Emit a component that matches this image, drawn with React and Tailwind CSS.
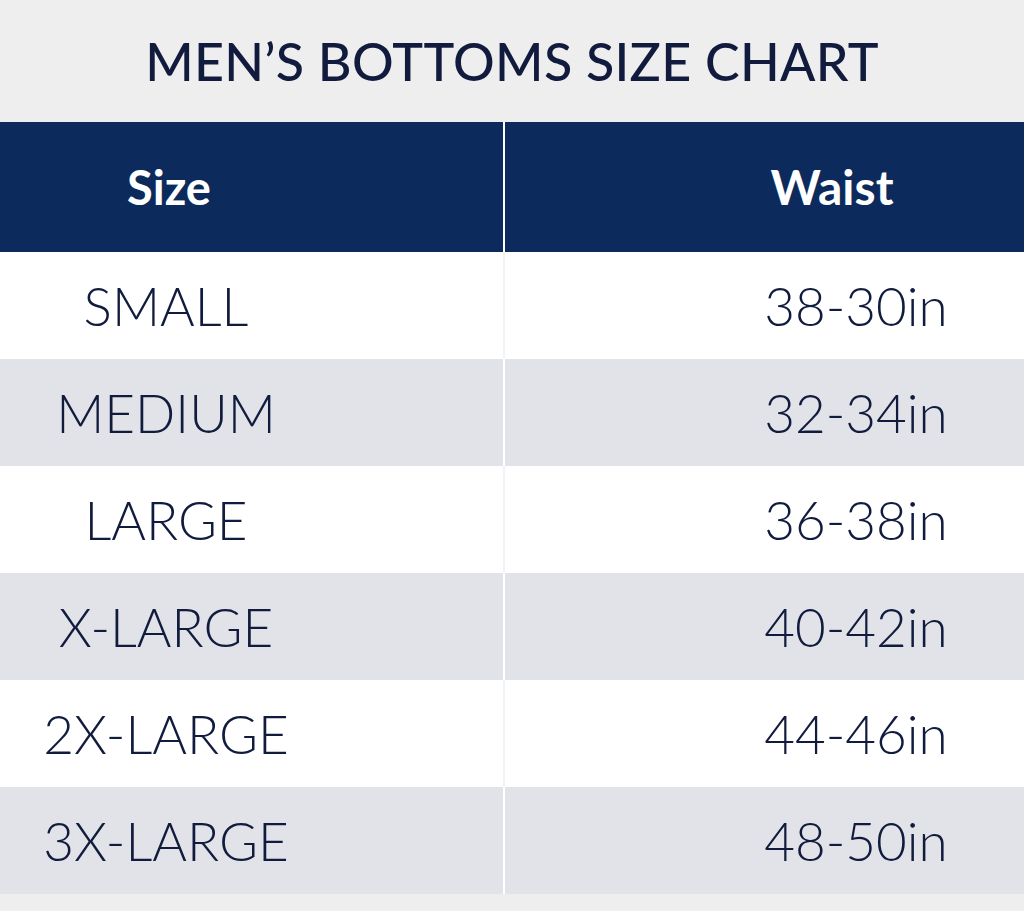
const ROWS = [
  ['SMALL', '38-30in'],
  ['MEDIUM', '32-34in'],
  ['LARGE', '36-38in'],
  ['X-LARGE', '40-42in'],
  ['2X-LARGE', '44-46in'],
  ['3X-LARGE', '48-50in'],
]

export default function App() {
  return (
    <div className="w-[1024px] h-[911px] bg-[#efeeef] text-[#111b3d] font-['Lato',sans-serif] overflow-hidden">
      <div className="h-[122px] flex items-center justify-center">
        <h1 className="text-[52px] font-medium tracking-[0.3px] leading-none">MEN’S BOTTOMS SIZE CHART</h1>
      </div>

      <div className="grid grid-cols-[503px_2px_1fr] h-[130px] bg-[#0d2a5c]">
        <div className="flex items-center">
          <div className="w-[338px] text-center text-white text-[47px] font-bold leading-none">Size</div>
        </div>
        <div className="bg-white" />
        <div className="flex items-center pl-[135px] justify-center text-white text-[48px] font-bold leading-none">Waist</div>
      </div>

      {ROWS.map(([size, waist], i) => (
        <div
          key={size}
          className={`grid grid-cols-[503px_2px_1fr] h-[107px] ${i % 2 ? 'bg-[#e2e3e8]' : 'bg-white'}`}
        >
          <div className="flex items-center">
            <div className="w-[332px] text-center text-[53px] font-light leading-none">{size}</div>
          </div>
          <div className={i % 2 ? 'bg-white' : 'bg-[#f3f3f5]'} />
          <div className="flex items-center justify-center pl-[183px] text-[53px] font-light leading-none">{waist}</div>
        </div>
      ))}
    </div>
  )
}
